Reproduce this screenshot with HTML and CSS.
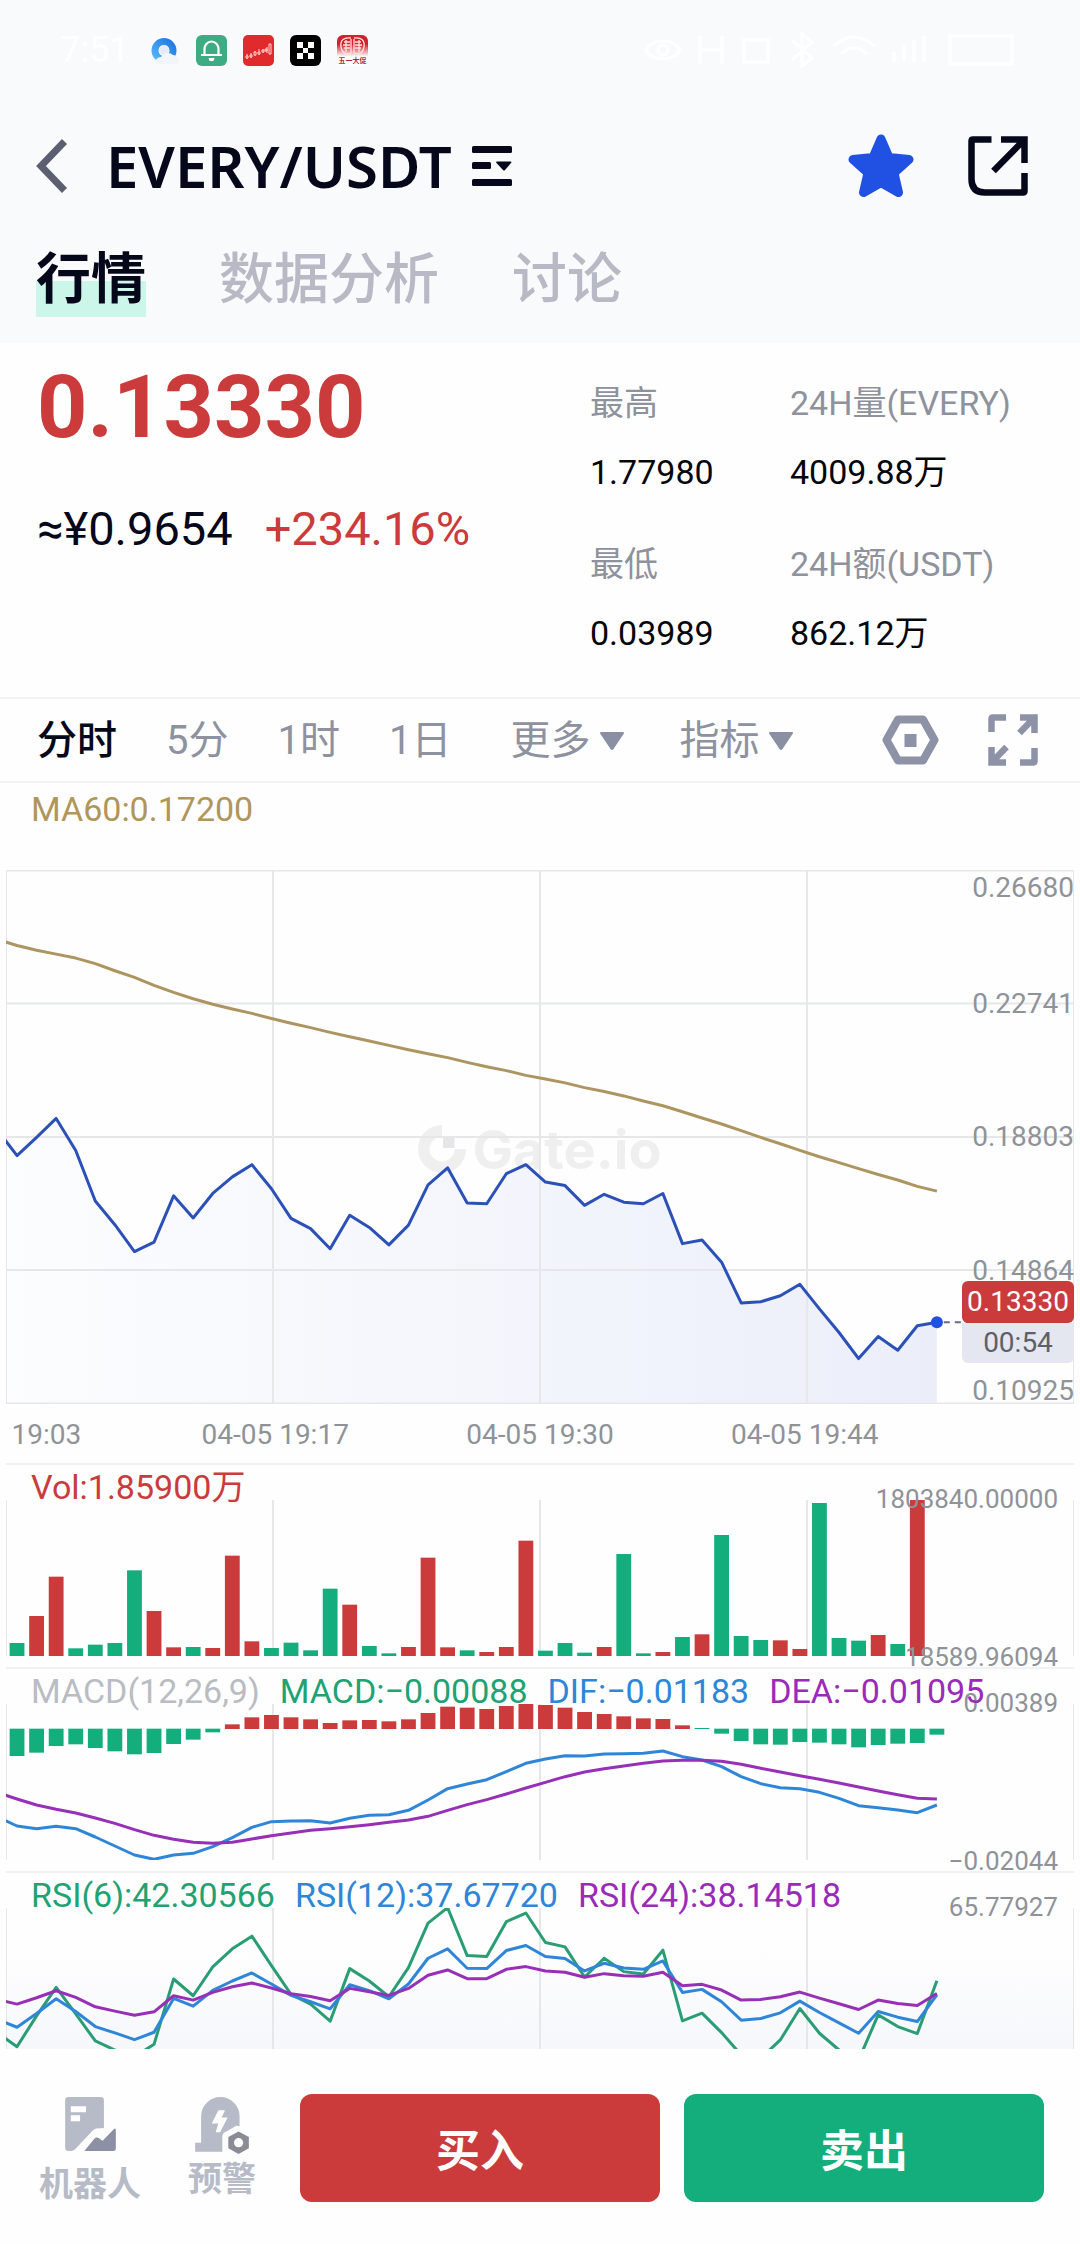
FILE: index.html
```html
<!DOCTYPE html>
<html lang="zh-CN">
<head>
<meta charset="utf-8">
<meta name="viewport" content="width=device-width, initial-scale=1">
<title>EVERY/USDT</title>
<link rel="stylesheet" href="styles.css">
</head>
<body>
<header class="top">
  <div class="status">
    <span class="clock">7:51</span>
    <div class="apps">
      <svg class="app" viewBox="0 0 31 31"><defs><linearGradient id="q" x1="0" y1="1" x2="1" y2="0"><stop offset="0" stop-color="#56b4f5"/><stop offset="1" stop-color="#1f78e4"/></linearGradient></defs><circle cx="15" cy="15.500" r="9" fill="#fff" stroke="url(#q)" stroke-width="7"/><circle cx="15" cy="15" r="5" fill="#e4ecf7"/><path d="M7 29a5 5 0 0 1 5-7 8 8 0 0 1 12-2 6 6 0 0 1 5 9z" fill="#f2f5fa"/></svg>
      <svg class="app" viewBox="0 0 31 31"><rect width="31" height="31" rx="6" fill="#3fab83"/><path d="M8.500 19v-5a7 7.500 0 0 1 14 0v5M5 20h21" fill="none" stroke="#fff" stroke-width="2.200"/><path d="M12.500 23h6l-1 3h-4z" fill="#fff"/></svg>
      <svg class="app" viewBox="0 0 31 31"><rect width="31" height="31" rx="5" fill="#e12a2b"/><path d="M4 19v5M8 18v5M12 16v5M16 14v6M20 14v4M24 12v6" stroke="#ffd9d6" stroke-width="1"/><path d="M3 21h2v2H3zM7 20h2v2H7zM11 17h2v3h-2zM15 17h2v2h-2zM19 15h2v2h-2zM22 14h2v2h-2zM26 9h2v10h-2z" fill="#e12a2b" stroke="#ffd9d6"/></svg>
      <svg class="app" viewBox="0 0 31 31"><rect width="31" height="31" rx="6" fill="#000"/><path d="M7 7h6v6H7zM18 7h6v6h-6zM13 13h5v5h-5zM7 18h6v6H7zM18 18h6v6h-6z" fill="#fff"/></svg>
      <svg class="app" viewBox="0 0 31 31"><defs><linearGradient id="r" x1="0" y1="0" x2="0" y2="1"><stop offset="0.300" stop-color="#d2202c"/><stop offset="0.700" stop-color="#fff"/></linearGradient></defs><rect width="31" height="31" rx="6" fill="url(#r)"/><path d="M14 3C7 2 3 5 4 12c1 6 5 8 10 6M17 3c7-1 11 2 10 9-1 6-5 8-10 6M14 4v14M17 4v14M7 7h6M6 10h7M7 13h6M9 5v12M18 7h6M18 10h7M18 13h6M22 5v12" fill="none" stroke="#ffe3df" stroke-width="1.300"/><text x="15.500" y="28" text-anchor="middle" class="app-text">五一大促</text></svg>
    </div>
    <svg class="system" viewBox="0 0 380 36" fill="none" stroke="#fff" stroke-width="3"><path d="M6 18c6-12 28-12 34 0-6 12-28 12-34 0zM60 4v28M60 18h22M82 4v28M104 8h24v22h-24zM152 8l20 18-10 8V2l10 8-20 18M194 14c12-12 28-12 40 0M201 22c8-8 18-8 26 0M254 30V20M264 30V14M274 30V8M284 30V4M310 4h62v28h-62z"/><circle cx="23" cy="18" r="5"/></svg>
  </div>
  <div class="title-row">
    <button class="icon-btn" aria-label="返回"><svg width="32" height="54" viewBox="0 0 32 54"><path d="M28.500 2.500 5 27l23.500 24.500" fill="none" stroke="#5b5f70" stroke-width="7"/></svg></button>
    <h1 class="pair">EVERY/USDT</h1>
    <button class="icon-btn pair-menu" aria-label="切换交易对"><svg width="40" height="40" viewBox="0 0 40 40" fill="#04081a"><rect width="40" height="7" rx="1.500"/><rect y="16" width="19" height="7" rx="1.500"/><rect y="33" width="40" height="7" rx="1.500"/><path d="M25 15.500h13.500q1.500 0 .5 1.500l-6 7q-1 1-2 0l-6.500-7q-1-1.500.5-1.500z"/></svg></button>
    <button class="icon-btn star" aria-label="收藏"><svg width="66" height="64" viewBox="0 0 66 64"><path d="M33 5 41 23.500 61 25.500 46 39 50.500 58.500 33 48.500 15.500 58.500 20 39 5 25.500 25 23.500z" fill="#2151e3" stroke="#2151e3" stroke-width="9" stroke-linejoin="round"/></svg></button>
    <button class="icon-btn" aria-label="分享"><svg width="60" height="60" viewBox="0 0 60 60" fill="none" stroke="#04081a" stroke-width="6.500"><path d="M23.500 3.500H5q-1.500 0-1.500 1.500v38q0 13.500 13.500 13.500h38q1.500 0 1.500-1.500V37"/><path d="M33 3.500h23.500V27M56 4 25.500 35"/></svg></button>
  </div>
  <nav class="tabs">
    <a href="#" class="tab active">行情</a>
    <a href="#" class="tab">数据分析</a>
    <a href="#" class="tab">讨论</a>
  </nav>
</header>

<main>
  <section class="summary">
    <div class="quote">
      <div class="last">0.13330</div>
      <div class="sub"><span>≈¥0.9654</span><span class="red">+234.16%</span></div>
    </div>
    <dl class="stats">
      <div><dt>最高</dt><dd>1.77980</dd></div>
      <div><dt>24H量(EVERY)</dt><dd>4009.88万</dd></div>
      <div><dt>最低</dt><dd>0.03989</dd></div>
      <div><dt>24H额(USDT)</dt><dd>862.12万</dd></div>
    </dl>
  </section>

  <div class="toolbar">
    <button class="tf active">分时</button>
    <button class="tf">5分</button>
    <button class="tf">1时</button>
    <button class="tf">1日</button>
    <button class="tf drop">更多<svg width="24" height="18" viewBox="0 0 24 18"><path d="M1.500 0h21Q25 0 23.500 2L13.500 17q-1.500 2-3 0L.5 2Q-1 0 1.500 0z" fill="#8a8fa3"/></svg></button>
    <button class="tf drop">指标<svg width="24" height="18" viewBox="0 0 24 18"><path d="M1.500 0h21Q25 0 23.500 2L13.500 17q-1.500 2-3 0L.5 2Q-1 0 1.500 0z" fill="#8a8fa3"/></svg></button>
    <button class="icon-btn settings" aria-label="设置"><svg width="57" height="50" viewBox="0 0 57 50"><path d="M16 4.500h25L52.500 25 41 45.500H16L4.500 25z" fill="none" stroke="#8d92a6" stroke-width="8" stroke-linejoin="round"/><path d="M22.500 19h12v13h-12z" fill="#8d92a6"/></svg></button>
    <button class="icon-btn" aria-label="全屏"><svg width="50" height="52" viewBox="0 0 50 52" fill="none" stroke="#8d92a6" stroke-width="6.500"><path d="M3.500 18V5q0-1.500 1.500-1.500h13M46.500 34v13q0 1.500-1.500 1.500H32M32 3.500h14.500V19M45 5 31.500 19M18 48.500H3.500V33M5 47l13.500-14"/></svg></button>
  </div>

  <section class="price-panel">
    <div class="legend gold">MA60:0.17200</div>
    <div class="plot price-plot">
      <div class="watermark"><svg width="48" height="48" viewBox="0 0 46 46"><path d="M23 5.500A17.500 17.500 0 1 0 40.500 23" fill="none" stroke="#efeff0" stroke-width="11"/><path d="M24 11h11v11H24z" fill="#e6e6e8"/></svg>Gate.io</div>
      <svg class="canvas" id="price" viewBox="18 75 3100 1352" preserveAspectRatio="none"></svg>
      <span class="tick first">0.26680</span>
      <span class="tick" style="top:25%">0.22741</span>
      <span class="tick" style="top:50%">0.18803</span>
      <span class="tick" style="top:75%">0.14864</span>
      <span class="tick last-tick">0.10925</span>
      <div class="tag"><b>0.13330</b><span>00:54</span></div>
    </div>
    <div class="dates">
      <span>19:03</span>
      <span>04-05 19:17</span>
      <span>04-05 19:30</span>
      <span>04-05 19:44</span>
      <span></span>
    </div>
  </section>

  <section class="panel">
    <div class="plot"><svg class="canvas" id="volume" viewBox="18 180 3100 468" preserveAspectRatio="none"></svg>
      <div class="range"><span>1803840.00000</span><span>18589.96094</span></div></div>
    <div class="legend over"><span class="red">Vol:1.85900万</span></div>
  </section>
  <section class="panel">
    <div class="plot"><svg class="canvas" id="macd" viewBox="18 792 3100 468" preserveAspectRatio="none"></svg>
      <div class="range"><span>0.00389</span><span>−0.02044</span></div></div>
    <div class="legend over"><span class="muted">MACD(12,26,9)</span><span class="green">MACD:−0.00088</span><span class="blue">DIF:−0.01183</span><span class="purple">DEA:−0.01095</span></div>
  </section>
  <section class="panel rsi">
    <div class="plot"><svg class="canvas" id="rsi" viewBox="18 176 3100 421" preserveAspectRatio="none"></svg>
      <div class="range"><span>65.77927</span></div></div>
    <div class="legend over"><span class="green">RSI(6):42.30566</span><span class="blue">RSI(12):37.67720</span><span class="purple">RSI(24):38.14518</span></div>
  </section>
</main>

<footer class="actions">
  <a href="#" class="tool"><svg width="51" height="54" viewBox="0 0 153 163"><path d="M10 0h97q10 0 10 10v84q-8-2-15 1-9-2-18 5L30 158q-5 5-12 5h-8q-10 0-10-10V10Q0 0 10 0z" fill="#b7bbc7"/><path d="M17 28h46v18H17zM17 55h28v18H17z" fill="#fff"/><path d="M58 163 88 126q6-7 13-2l12 8 33-34q7-6 7 2v55q0 8-8 8z" fill="#8d90a5"/></svg><span>机器人</span></a>
  <a href="#" class="tool alert"><svg width="54" height="57" viewBox="0 0 162 172"><path d="M18 138V58a58 58 0 0 1 116 0v30l-10-1-38 22-4 8v48H0v-27z" fill="#b7bbc7"/><path d="M70 40h20L80 62h18L75 106H62l8-26H50z" fill="#fff"/><path d="m131 104 31 17v34l-31 17-31-17v-34z" fill="#898c97"/><circle cx="131" cy="138" r="14" fill="#fff"/></svg><span>预警</span></a>
  <button class="trade buy">买入</button>
  <button class="trade sell">卖出</button>
</footer>
<script src="chart.js"></script>
</body>
</html>
```
FILE: styles.css
```css
* { box-sizing: border-box; }
body {
  margin: 0;
  min-height: 100vh;
  display: flex;
  flex-direction: column;
  background: #fefefe;
  color: #04081a;
  font-family: Roboto, "Noto Sans CJK SC", sans-serif;
}
main { flex: 1; }
button { border: 0; padding: 0; background: none; font: inherit; color: inherit; cursor: pointer; }
a { color: inherit; text-decoration: none; }
svg { display: block; flex: none; }
h1, dl, dd { margin: 0; }

.red { color: #cb3b3b; }
.gold { color: #b0965b; }
.green { color: #1fa274; }
.blue { color: #2e86d9; }
.purple { color: #9a2bb8; }
.muted { color: #b9bcc2; }

/* header */
.top { background: #f9fafc; padding-bottom: 26px; }
.status { display: flex; align-items: center; height: 100px; padding: 0 60px; color: #fff; }
.clock { width: 89px; font-size: 36px; }
.apps { display: flex; gap: 16px; }
.app { width: 31px; height: 31px; }
.app-text { font: 700 7px "Noto Sans CJK SC", sans-serif; fill: #b02a35; }
.system { width: 380px; height: 36px; margin-left: auto; }
.title-row { display: flex; align-items: center; height: 132px; padding: 0 52px 0 36px; }
.pair { margin-left: 38px; font: 600 58px/64px "Noto Sans", sans-serif; }
.pair-menu { margin-left: 20px; }
.star { margin-left: auto; margin-right: 54px; }
.tabs { display: flex; gap: 73px; padding: 5px 36px 0; }
.tab { padding-top: 4px; font-size: 55px; line-height: 76px; font-weight: 500; color: #b7bac5; }
.tab.active { font-weight: 700; color: #04081a; background: linear-gradient(#ccf6ea, #ccf6ea) 0 100% / 100% 36px no-repeat; }

/* quote */
.summary { display: flex; justify-content: space-between; }
.quote { padding: 14px 0 0 37px; }
.last { font-size: 88px; line-height: 100px; font-weight: 700; color: #cb3b3b; }
.sub { display: flex; gap: 32px; margin-top: 42px; font-size: 47px; line-height: 60px; }
.stats { display: grid; grid-template-columns: 200px 290px; row-gap: 44px; padding: 36px 0 40px; font-size: 34px; line-height: 48px; }
.stats dt { color: #8e929c; }
.stats dd { margin-top: 21px; color: #04060c; }

/* interval bar */
.toolbar { display: flex; align-items: center; gap: 49px; height: 86px; padding: 0 42px 0 37px; border-top: 2px solid #f0f1f3; border-bottom: 2px solid #f0f1f3; }
.tf { padding-top: 2px; font-size: 40px; line-height: 56px; color: #8e92a0; white-space: nowrap; }
.tf.active { font-weight: 500; color: #04081a; }
.drop { display: flex; align-items: center; gap: 10px; margin-left: 10px; }
.drop + .drop { margin-left: 6px; }
.settings { margin-left: auto; }

/* charts */
.legend { padding: 0 31px; font-size: 34px; line-height: 52px; white-space: nowrap; }
.plot { position: relative; height: 156px; margin: 0 6px; }
.price-plot { height: 534px; margin-top: 35px; }
.canvas { position: relative; width: 100%; height: 100%; overflow: hidden; }
.canvas * { vector-effect: non-scaling-stroke; }
.watermark { position: absolute; inset: 50% 0 auto; display: flex; justify-content: center; align-items: center; gap: 6px; height: 24px; font: 700 54px "Inter", sans-serif; color: #efeff0; }
.tick { position: absolute; right: 0; transform: translateY(-50%); font-size: 28px; line-height: 34px; color: #8f9399; }
.tick.first { top: 1px; transform: none; }
.tick.last-tick { bottom: -4px; transform: none; }
.tag { position: absolute; right: 0; top: 77%; width: 112px; text-align: center; font-size: 28px; line-height: 42px; }
.tag b { display: block; border-radius: 6px; background: #cb3b3b; color: #fff; font-weight: 400; }
.tag span { display: block; border-radius: 0 0 6px 6px; background: #e4e6f0; color: #5d6069; line-height: 40px; }
.dates { display: grid; grid-template-columns: repeat(5, 1fr); margin: 9px -128px 0 -128px; padding: 0 6px; font-size: 28px; line-height: 44px; color: #8f9399; text-align: center; }
.dates span:first-child { padding-left: 72px; }
.price-panel { overflow: hidden; padding-bottom: 6px; }
.panel { position: relative; padding: 35px 0 11px; }
.panel::before { content: ""; position: absolute; inset: 0 6px auto; height: 2px; background: #f0f1f3; }
.panel .plot { margin-top: 2px; }
.range { position: absolute; inset: -18px 16px -18px auto; display: flex; flex-direction: column; justify-content: space-between; text-align: right; font-size: 26px; line-height: 34px; color: #8f9399; }
.over { position: absolute; inset: 2px 0 auto; display: flex; gap: 20px; line-height: 44px; }
.rsi { padding-bottom: 0; }
.rsi .plot { height: 141px; background: linear-gradient(#fefefe 30%, #f6f7fb); }

/* bottom bar */
.actions { display: flex; align-items: flex-start; gap: 24px; padding: 43px 36px 36px 39px; }
.tool { display: flex; flex-direction: column; align-items: center; gap: 9px; margin: 3px 23px 0 0; font-size: 34px; line-height: 48px; font-weight: 700; color: #b7bbc7; white-space: nowrap; }
.tool.alert { gap: 1px; margin-right: 20px; }
.trade { flex: 1; height: 108px; border-radius: 12px; font-size: 44px; font-weight: 700; color: #fff; }
.buy { background: #cb3b3b; }
.sell { background: #13ae7c; }
```
FILE: chart.js
```javascript
const X0 = 50, X_LAST = 2720, BAR = 43;
const STEP = (X_LAST - X0) / 47;
const RED = "#cb3b3b", GREEN = "#13ae7c", BLUE = "#2f86d8", PURPLE = "#9730b6", RSI_GREEN = "#2a9d74";
const x = i => X0 + STEP * i;

// Line series start one sample before the left edge of the plot.
const price = [734,798,752,704,785,913,973,1041,1017,900,956,894,852,821,882,957,983,1034,949,980,1024,974,872,829,918,920,844,821,865,874,924,896,916,920,894,1021,1012,1068,1171,1168,1153,1124,1186,1246,1312,1256,1291,1229,1220];
const ma60 = [251,266,278,288,298,312,330,347,367,385,401,415,427,438,451,463,474,486,497,508,519,530,540,550,562,573,583,595,604,614,626,636,647,660,672,687,703,718,735,752,768,785,801,816,831,846,860,876,888];
const dif = [1131,1158,1166,1159,1166,1191,1218,1245,1258,1245,1240,1220,1193,1162,1145,1143,1142,1149,1135,1126,1124,1111,1080,1046,1032,1019,995,970,957,947,948,942,941,940,933,950,960,980,1010,1031,1043,1046,1057,1075,1097,1103,1110,1118,1095];
const dea = [1058,1077,1095,1108,1119,1134,1150,1169,1186,1198,1207,1210,1207,1197,1187,1179,1171,1166,1160,1154,1147,1140,1129,1111,1094,1079,1062,1044,1027,1010,996,986,978,970,963,961,961,964,973,985,996,1007,1018,1029,1041,1053,1064,1075,1077];
const rsi6 = [549,590,498,413,492,573,600,620,583,388,438,352,298,260,348,434,463,514,357,394,441,354,221,175,318,321,217,191,279,292,382,326,366,373,302,513,490,548,615,625,570,476,550,600,630,495,530,551,393];
const rsi12 = [509,532,491,447,485,530,549,569,547,446,469,422,394,370,403,437,456,477,405,423,447,403,326,298,356,357,303,288,321,327,364,341,355,359,334,428,419,456,511,506,489,454,488,519,550,485,502,515,435];
const rsi24 = [449,463,444,423,443,471,484,496,486,438,451,428,411,400,415,432,440,453,416,426,437,416,377,361,387,387,359,351,364,368,383,372,378,380,368,408,404,421,451,449,441,427,445,462,479,451,461,467,431];
// Tops of the volume bars; a negative value marks a falling interval.
const volume = [-609,528,410,-625,-614,-609,-391,513,622,-621,624,347,604,-624,-608,-631,-446,494,-618,-640,621,353,622,-631,636,621,302,-632,-609,-638,621,-342,-640,636,-591,583,-285,-588,-600,601,627,-189,-594,-602,585,-612,180];
const macd = [948,938,918,913,924,934,943,939,912,899,877,853,832,825,832,838,849,841,840,844,838,819,800,803,807,798,792,795,803,816,822,829,835,837,856,864,881,903,913,914,906,908,913,922,915,911,909,884];

const points = data => data.map((y, i) => x(i - 1).toFixed(1) + " " + y).join("L");
const line = (data, color) =>
  `<path d="M${points(data)}" fill="none" stroke="${color}" stroke-width="3" stroke-linejoin="round"/>`;
const rect = (i, top, bottom, color) =>
  `<rect x="${(x(i) - BAR / 2).toFixed(1)}" y="${top}" width="${BAR}" height="${bottom - top}" fill="${color}"/>`;
const grid = (top, bottom, rows = []) =>
  `<path d="${[18, 793, 1568, 2343, 3118].map(v => `M${v} ${top}V${bottom}`).join("")}${rows.map(r => `M18 ${r}H3118`).join("")}" fill="none" stroke="#e6e7e9" stroke-width="2"/>`;
const draw = (id, markup) => { document.getElementById(id).innerHTML = markup; };

draw("price",
  `<defs><linearGradient id="area"><stop offset="0" stop-color="#3f66e0" stop-opacity="0.01"/><stop offset="1" stop-color="#2c50c8" stop-opacity="0.09"/></linearGradient></defs>` +
  `<path d="M${points(price)}V1427H-7z" fill="url(#area)"/>` +
  grid(75, 1427, [76, 413, 751, 1088, 1426]) +
  line(ma60, "#ad9561") + line(price, "#2b50b8") +
  `<path d="M2740 1220H2840" stroke="#6a6d80" stroke-width="2" stroke-dasharray="6 5"/>` +
  `<path d="M2720 1220h.01" stroke="#2151e3" stroke-width="12" stroke-linecap="round"/>`);

draw("volume", grid(180, 648) +
  volume.map((v, i) => rect(i, Math.abs(v), 648, v < 0 ? GREEN : RED)).join(""));

draw("macd", grid(792, 1260) +
  macd.map((v, i) => v < 860 ? rect(i, v, 867, RED) : rect(i, Math.min(v, 866), Math.max(v, 867), GREEN)).join("") +
  line(dif, BLUE) + line(dea, PURPLE));

draw("rsi", grid(176, 597) + line(rsi6, RSI_GREEN) + line(rsi12, BLUE) + line(rsi24, PURPLE));
```
